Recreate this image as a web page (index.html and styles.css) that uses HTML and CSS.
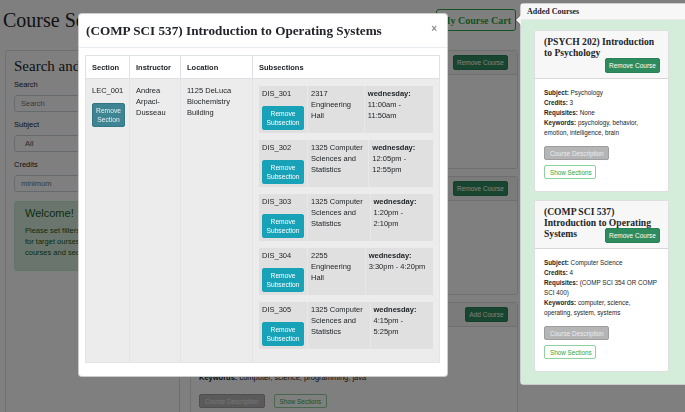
FILE: index.html
```html
<!DOCTYPE html>
<html lang="en">
<head>
<meta charset="utf-8">
<title>Course Search and Planner</title>
<link rel="stylesheet" href="styles.css">
</head>
<body>
<div class="page">
  <header class="topbar">
    <h1 class="app-title">Course Search and Planner</h1>
    <button class="cart-btn">My Course Cart</button>
  </header>
  <div class="main">
    <aside class="filters">
      <h2 class="filters-title">Search and Filter</h2>
      <label class="field-label">Search</label>
      <input class="field" placeholder="Search">
      <label class="field-label">Subject</label>
      <select class="field"><option>All</option></select>
      <label class="field-label">Credits</label>
      <input class="field" placeholder="minimum">
      <div class="welcome">
        <h3 class="welcome-title">Welcome!</h3>
        <p class="welcome-text">Please set filters on the left to search<br>for target ourses, then add the<br>courses and sections to your cart.</p>
      </div>
    </aside>
    <section class="results">
      <article class="course">
        <div class="course-head">
          <h3 class="course-title">(COMP SCI 537) Introduction to Operating Systems</h3>
          <button class="btn btn-green">Remove Course</button>
        </div>
        <div class="course-body">
          <p><b>Subject:</b> Computer Science</p>
          <p><b>Credits:</b> 4</p>
          <p><b>Requisites:</b> (COMP SCI 354 OR COMP SCI 400)</p>
          <p><b>Keywords:</b> computer, science, operating, system, systems</p>
          <div class="course-actions">
            <button class="btn btn-desc">Course Description</button>
            <button class="btn btn-outline">Show Sections</button>
          </div>
        </div>
      </article>
      <article class="course">
        <div class="course-head">
          <h3 class="course-title">(PSYCH 202) Introduction to Psychology</h3>
          <button class="btn btn-green">Remove Course</button>
        </div>
        <div class="course-body">
          <p><b>Subject:</b> Psychology</p>
          <p><b>Credits:</b> 3</p>
          <p><b>Requisites:</b> None</p>
          <p><b>Keywords:</b> psychology, behavior, emotion, intelligence, brain</p>
          <div class="course-actions">
            <button class="btn btn-desc">Course Description</button>
            <button class="btn btn-outline">Show Sections</button>
          </div>
        </div>
      </article>
      <article class="course">
        <div class="course-head">
          <h3 class="course-title">(COMP SCI 300) Programming II</h3>
          <button class="btn btn-green btn-add">Add Course</button>
        </div>
        <div class="course-body">
          <p><b>Subject:</b> Computer Science</p>
          <p><b>Credits:</b> 3</p>
          <p><b>Requisites:</b> (COMP SCI 200)</p>
          <p><b>Keywords:</b> computer, science, programming, java</p>
          <div class="course-actions">
            <button class="btn btn-desc">Course Description</button>
            <button class="btn btn-outline">Show Sections</button>
          </div>
        </div>
      </article>
    </section>
  </div>
</div>

<div class="backdrop"></div>

<div class="modal">
  <div class="modal-head">
    <h2 class="modal-title">(COMP SCI 537) Introduction to Operating Systems</h2>
    <span class="modal-close">×</span>
  </div>
  <div class="modal-body">
    <table class="sections">
      <thead>
        <tr>
          <th class="col-section">Section</th>
          <th class="col-instructor">Instructor</th>
          <th class="col-location">Location</th>
          <th>Subsections</th>
        </tr>
      </thead>
      <tbody>
        <tr>
          <td>LEC_001<button class="btn btn-section">Remove<br>Section</button></td>
          <td>Andrea Arpaci-Dusseau</td>
          <td>1125 DeLuca Biochemistry Building</td>
          <td class="subs-cell">
            <table class="sub">
              <tr><td class="sub-id">DIS_301<button class="btn btn-sub">Remove<br>Subsection</button></td><td>2317 Engineering Hall</td><td><b>wednesday:</b> 11:00am - 11:50am</td></tr>
            </table>
            <table class="sub">
              <tr><td class="sub-id">DIS_302<button class="btn btn-sub">Remove<br>Subsection</button></td><td>1325 Computer Sciences and Statistics</td><td><b>wednesday:</b> 12:05pm - 12:55pm</td></tr>
            </table>
            <table class="sub">
              <tr><td class="sub-id">DIS_303<button class="btn btn-sub">Remove<br>Subsection</button></td><td>1325 Computer Sciences and Statistics</td><td><b>wednesday:</b> 1:20pm - 2:10pm</td></tr>
            </table>
            <table class="sub">
              <tr><td class="sub-id">DIS_304<button class="btn btn-sub">Remove<br>Subsection</button></td><td>2255 Engineering Hall</td><td><b>wednesday:</b> 3:30pm - 4:20pm</td></tr>
            </table>
            <table class="sub">
              <tr><td class="sub-id">DIS_305<button class="btn btn-sub">Remove<br>Subsection</button></td><td>1325 Computer Sciences and Statistics</td><td><b>wednesday:</b> 4:15pm - 5:25pm</td></tr>
            </table>
          </td>
        </tr>
      </tbody>
    </table>
  </div>
</div>

<div class="popover">
  <div class="popover-head">Added Courses</div>
  <div class="popover-body">
    <article class="cart-card">
      <div class="cart-head">
        <span class="cart-title">(PSYCH 202) Introduction to Psychology</span><button class="btn btn-green btn-float">Remove Course</button>
      </div>
      <div class="cart-body">
        <p><b>Subject:</b> Psychology</p>
        <p><b>Credits:</b> 3</p>
        <p><b>Requisites:</b> None</p>
        <p><b>Keywords:</b> psychology, behavior, emotion, intelligence, brain</p>
        <button class="btn btn-desc btn-block">Course Description</button>
        <button class="btn btn-outline btn-block">Show Sections</button>
      </div>
    </article>
    <article class="cart-card">
      <div class="cart-head">
        <span class="cart-title">(COMP SCI 537) Introduction to Operating Systems</span><button class="btn btn-green btn-float">Remove Course</button>
      </div>
      <div class="cart-body">
        <p><b>Subject:</b> Computer Science</p>
        <p><b>Credits:</b> 4</p>
        <p><b>Requisites:</b> (COMP SCI 354 OR COMP SCI 400)</p>
        <p><b>Keywords:</b> computer, science, operating, system, systems</p>
        <button class="btn btn-desc btn-block">Course Description</button>
        <button class="btn btn-outline btn-block">Show Sections</button>
      </div>
    </article>
  </div>
</div>
</body>
</html>
```

FILE: styles.css
```css
* { box-sizing: border-box; }
html, body { margin: 0; height: 100%; overflow: hidden; }
body {
  font-family: "Liberation Sans", Arial, sans-serif;
  font-size: 7.5px;
  line-height: 11px;
  color: #212529;
  background: #fff;
}
p { margin: 0; }
button { font-family: "Liberation Sans", Arial, sans-serif; cursor: pointer; }

/* ---------- page under the backdrop ---------- */
.page { width: 518px; }
.topbar {
  display: flex;
  justify-content: space-between;
  align-items: flex-start;
  height: 50px;
  padding: 8px 2px 0 3px;
}
.app-title { margin: 0; font: 400 20px/24px "Liberation Serif", serif; white-space: nowrap; }
.cart-btn {
  margin-top: 1px;
  height: 22px;
  padding: 0 4px;
  background: transparent;
  border: 1px solid #28a745;
  border-radius: 3px;
  color: #28a745;
  font: 700 10px "Liberation Serif", serif;
}
.main { display: flex; gap: 10px; padding-left: 5px; }
.filters {
  width: 175px;
  flex: none;
  min-height: 420px;
  border: 1px solid #dfdfdf;
  border-radius: 3px;
  padding: 7px 8px;
}
.filters-title { margin: 0 0 6px; font: 400 15px/16px "Liberation Serif", serif; white-space: nowrap; }
.field-label { display: block; line-height: 10px; margin-bottom: 5px; }
.field {
  display: block;
  width: 100%;
  height: 17px;
  margin: 0 0 8px;
  padding: 0 6px;
  border: 1px solid #ced4da;
  border-radius: 3px;
  background: #fff;
  color: #495057;
  font: 7.5px "Liberation Sans", Arial, sans-serif;
}
.field::placeholder { color: #6c757d; }
.welcome {
  margin-top: 9px;
  padding: 5px 10px 12px;
  background: #d4edda;
  border: 1px solid #c3e6cb;
  border-radius: 3px;
  color: #155724;
}
.welcome-title { margin: 0 0 5px; font: 400 11px/13px "Liberation Sans", Arial, sans-serif; }
.welcome-text { white-space: nowrap; }

.results { width: 328px; flex: none; display: flex; flex-direction: column; gap: 7px; }
.course { border: 1px solid #dfdfdf; border-radius: 3px; }
.course-head {
  display: flex;
  justify-content: space-between;
  align-items: center;
  height: 24px;
  padding: 0 9px;
  background: #f7f7f7;
  border-bottom: 1px solid #dfdfdf;
}
.course-title { margin: 0; font: 700 10px "Liberation Serif", serif; }
.course-body { padding: 12px 9px 12px 8px; }
.course-actions { display: flex; gap: 9px; margin-top: 11px; }

/* ---------- buttons ---------- */
.btn {
  border-radius: 2px;
  padding: 0 5px;
  font-size: 6.5px;
  line-height: 9px;
  white-space: nowrap;
}
.btn-green { height: 15px; width: 55px; padding: 0; background: #2e8b5e; border: 1px solid #2a8157; color: #fff; }
.btn-add { width: 43px; }
.btn-desc { height: 14px; background: #b5b5b5; border: 1px solid #9e9e9e; color: #ececec; font-size: 6.3px; }
.btn-outline { height: 14px; background: #fff; border: 1px solid #8fd19e; color: #28a745; font-size: 6.3px; }
.btn-block { display: block; }
.btn-block + .btn-block { margin-top: 5px; }

/* ---------- backdrop ---------- */
.backdrop { position: fixed; inset: 0; background: rgba(0, 0, 0, 0.5); z-index: 10; }

/* ---------- modal ---------- */
.modal {
  position: fixed;
  left: 78px;
  top: 13px;
  width: 370px;
  z-index: 20;
  background: #fff;
  border: 1px solid rgba(0, 0, 0, 0.2);
  border-radius: 4px;
}
.modal-head {
  display: flex;
  justify-content: space-between;
  align-items: center;
  height: 34px;
  padding: 0 10px 0 7px;
  border-bottom: 1px solid #e9ecef;
}
.modal-title { margin: 0; font: 700 13.2px/16px "Liberation Serif", serif; color: #212529; }
.modal-close { font: 700 10px "Liberation Sans", Arial, sans-serif; color: #8a8a8a; margin-top: -4px; }
.modal-body { padding: 7px 7px 13px 6px; }

.sections { width: 100%; border-collapse: collapse; table-layout: fixed; }
.sections th, .sections > tbody > tr > td { border: 1px solid #dee2e6; text-align: left; }
.sections th { height: 23px; padding: 0 6px; font-weight: 700; background: #fff; }
.col-section { width: 44px; }
.col-instructor { width: 51px; }
.col-location { width: 72px; }
.sections > tbody > tr > td {
  vertical-align: top;
  padding: 6px 6px;
  background: #ececec;
  border-color: #e1e4e8;
}
.sections > tbody > tr > td.subs-cell { padding: 7px 6px 6px; }
.btn-section {
  display: block;
  width: 33px;
  height: 24px;
  margin-top: 7px;
  padding: 0;
  background: #3e8492;
  border: 1px solid #347684;
  color: #e6f1f3;
  font-size: 6.7px;
}
.sub { width: 100%; border-collapse: collapse; background: #e0e0e0; margin-bottom: 7px; }
.sub td { vertical-align: top; padding: 1.5px 3px 3.6px; border-left: 1px solid #e8e8e8; }
.sub td.sub-id { border-left: 0; }
.btn-sub {
  display: block;
  width: 42px;
  height: 24px;
  margin-top: 7px;
  padding: 0;
  background: #17a2b8;
  border: 1px solid #17a2b8;
  color: #fff;
  font-size: 6.7px;
}

/* ---------- popover ---------- */
.popover {
  position: fixed;
  left: 520px;
  top: 3px;
  width: 175px;
  z-index: 20;
  border: 1px solid rgba(0, 0, 0, 0.2);
  border-radius: 4px 0 0 4px;
  background: #fff;
}
.popover::before, .popover::after {
  content: "";
  position: absolute;
  top: 11px;
  border: 5px solid transparent;
  border-left: 0;
}
.popover::before { left: -6px; border-right: 5px solid rgba(0, 0, 0, 0.25); }
.popover::after { left: -5px; border-right: 5px solid #f7f7f7; }
.popover-head {
  height: 16px;
  padding: 0 6px;
  font: 700 8px/15px "Liberation Serif", serif;
  background: #f7f7f7;
  border-bottom: 1px solid #ebebeb;
}
.popover-body { padding: 10px 13px 12px; background: #d4edda; }
.cart-card {
  width: 135px;
  background: #fff;
  border: 1px solid rgba(0, 0, 0, 0.125);
  border-radius: 3px;
}
.cart-card + .cart-card { margin-top: 8px; }
.cart-head {
  display: flow-root;
  padding: 5px 8px 5px 9px;
  background: #f7f7f7;
  border-bottom: 1px solid rgba(0, 0, 0, 0.125);
  font: 700 9.6px/11px "Liberation Serif", serif;
}
.btn-float { float: right; margin-left: 9px; }
.cart-body { padding: 9px 8px 12px 9px; font-size: 6.3px; line-height: 10px; }
.cart-body .btn-desc { margin-top: 8px; width: 65px; }
.cart-body .btn-outline { width: 52px; }
```
